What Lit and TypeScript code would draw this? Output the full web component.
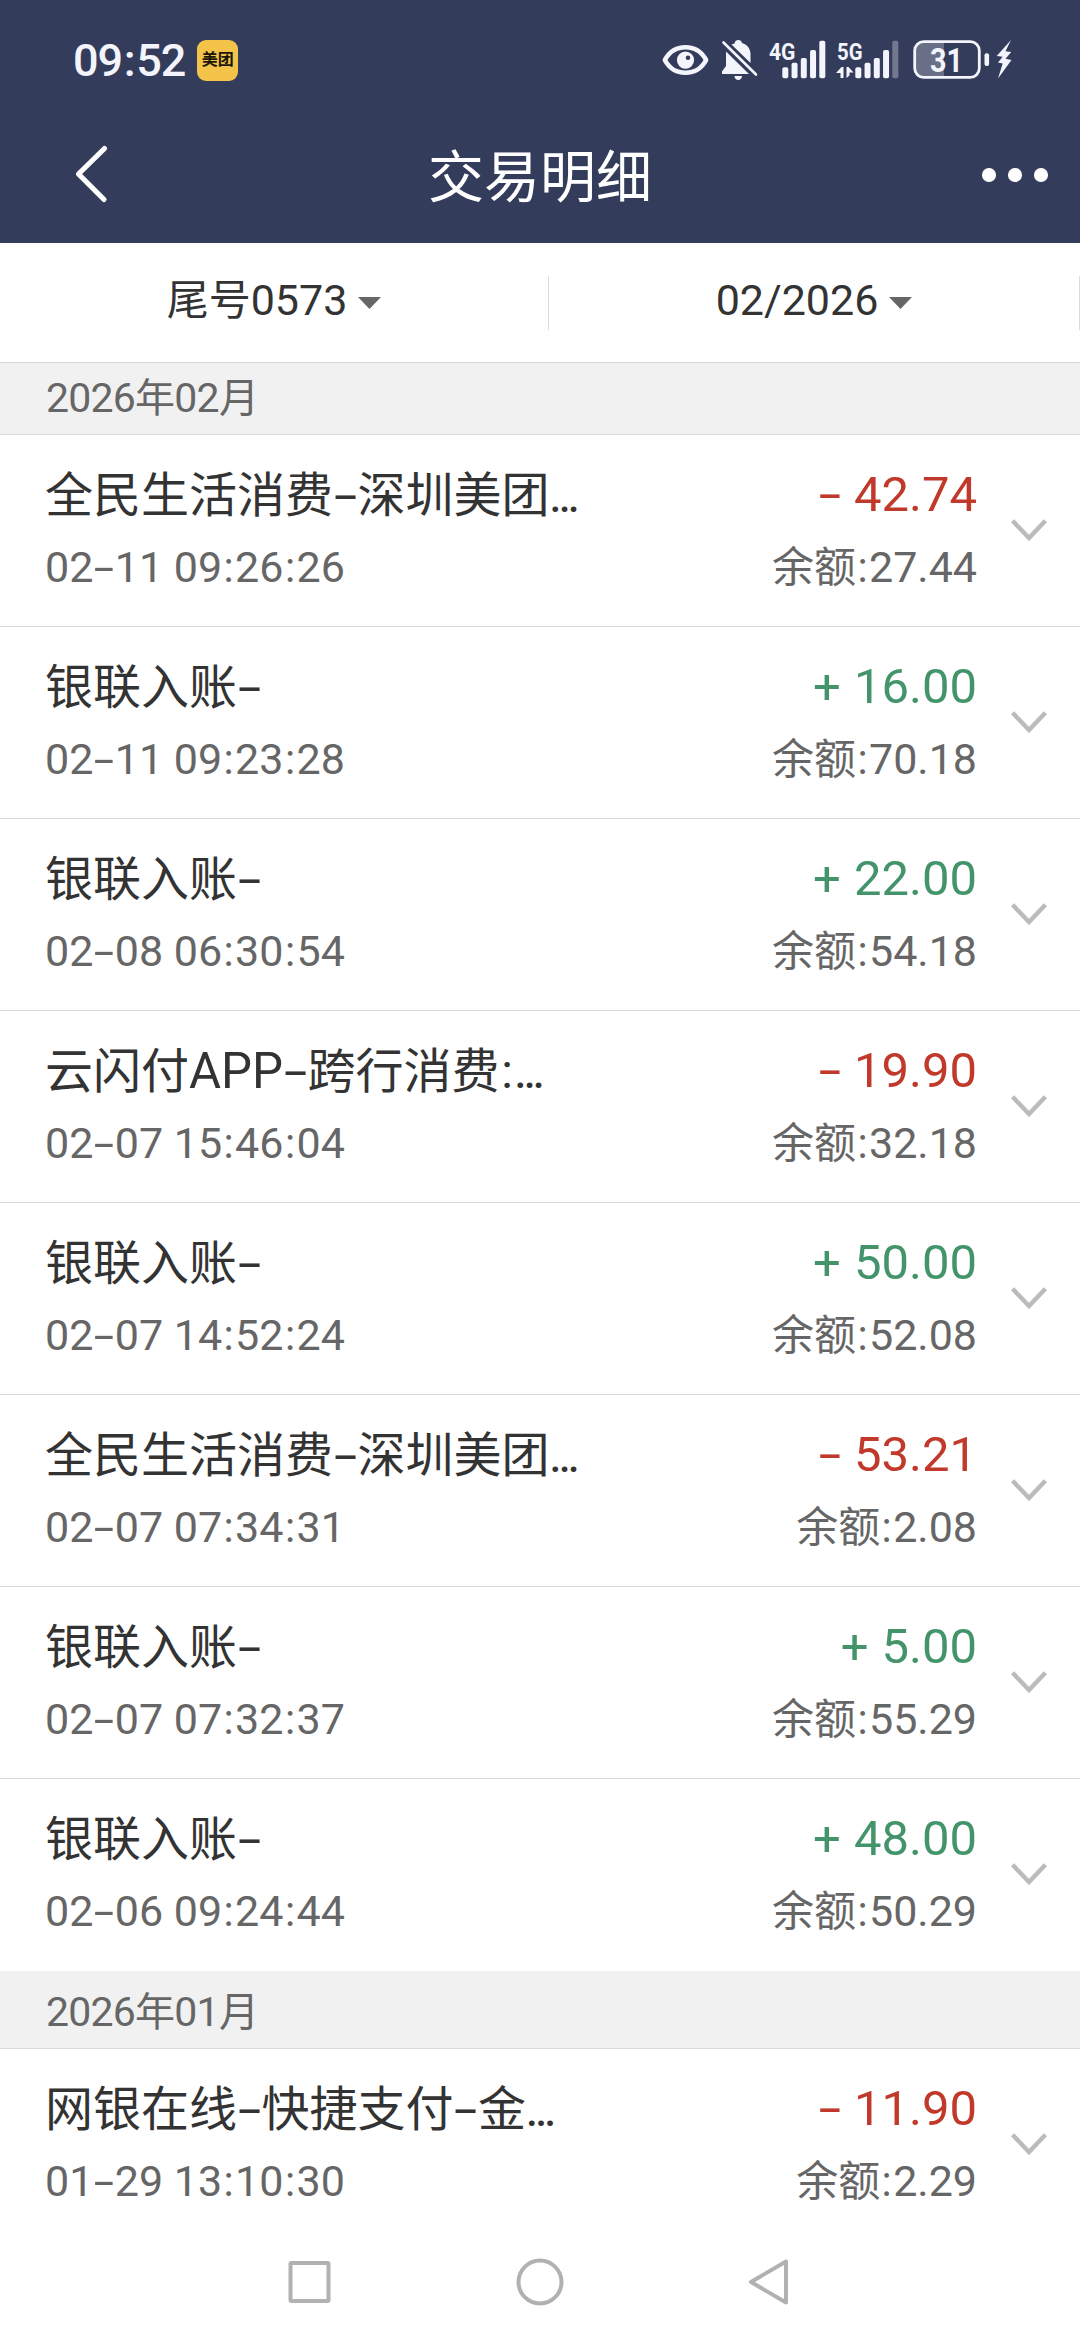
import { LitElement, html, css, svg } from "lit";
import { customElement, property } from "lit/decorators.js";

interface Entry {
  title: string;
  time: string;
  amount: string;
  balance: string;
}

interface Month {
  label: string;
  entries: Entry[];
}

const MONTHS: Month[] = [
  {
    label: "2026年02月",
    entries: [
      { title: "全民生活消费-深圳美团…", time: "02-11 09:26:26", amount: "- 42.74", balance: "27.44" },
      { title: "银联入账-", time: "02-11 09:23:28", amount: "+ 16.00", balance: "70.18" },
      { title: "银联入账-", time: "02-08 06:30:54", amount: "+ 22.00", balance: "54.18" },
      { title: "云闪付APP-跨行消费:…", time: "02-07 15:46:04", amount: "- 19.90", balance: "32.18" },
      { title: "银联入账-", time: "02-07 14:52:24", amount: "+ 50.00", balance: "52.08" },
      { title: "全民生活消费-深圳美团…", time: "02-07 07:34:31", amount: "- 53.21", balance: "2.08" },
      { title: "银联入账-", time: "02-07 07:32:37", amount: "+ 5.00", balance: "55.29" },
      { title: "银联入账-", time: "02-06 09:24:44", amount: "+ 48.00", balance: "50.29" },
    ],
  },
  {
    label: "2026年01月",
    entries: [
      { title: "网银在线-快捷支付-金…", time: "01-29 13:10:30", amount: "- 11.90", balance: "2.29" },
    ],
  },
];

/** Splits mixed text so that Latin runs, dashes, colons and ellipses get their own metrics. */
const mixed = (text: string) =>
  (text.match(/-|:|…|[\x20-\x2c\x2e-\x39\x3b-\x7e]+|[^\x00-\x7e…]+/g) ?? []).map((part) => {
    if (part === "-") return html`<span class="dash"><span class="stretch">-</span></span>`;
    if (part === ":") return html`<span class="colon">:</span>`;
    if (part === "…") return html`<span class="dots">…</span>`;
    if (part.charCodeAt(0) < 128) return html`<span class="latin">${part}</span>`;
    return part;
  });

const textStyles = css`
  .latin {
    font-size: 1.024em;
    line-height: 1;
    white-space: pre;
  }
  .dash {
    display: inline-block;
    width: 0.51em;
    line-height: 1;
    text-align: center;
  }
  .stretch {
    display: inline-block;
    transform: scaleX(1.75);
  }
  .colon {
    display: inline-block;
    width: 0.31em;
    line-height: 1;
    text-align: center;
  }
  .dots {
    font-size: 0.87em;
    font-weight: 500;
    line-height: 1;
  }
`;

@customElement("status-bar")
class StatusBar extends LitElement {
  static styles = css`
    :host {
      display: flex;
      align-items: center;
      height: 120px;
      padding: 0 68px 0 73px;
      color: #f3f4fc;
    }
    .clock {
      display: flex;
      font-size: 45px;
      font-weight: 500;
      line-height: 60px;
      letter-spacing: -1px;
      padding-top: 1px;
    }
    .sep {
      width: 14px;
      text-align: center;
    }
    .badge {
      display: flex;
      align-items: center;
      justify-content: center;
      width: 41px;
      height: 41px;
      margin-left: 12px;
      border-radius: 9px;
      background: #f4c44a;
      color: #1d1708;
      font-size: 16px;
      font-weight: 700;
      line-height: 16px;
    }
    .icons {
      margin-left: auto;
      display: block;
    }
    .net {
      font: 700 24px Roboto, sans-serif;
      fill: #f3f4fc;
    }
    .level {
      font: 700 34px Roboto, sans-serif;
      fill: #f3f4fc;
    }
  `;

  render() {
    const bars = (x: number, dim: boolean) =>
      [142, 128, 114, 90, 62].map(
        (top, i) => svg`<rect x=${x + i * 9.25} y=${top / 3} width="6" height=${(175 - top) / 3} rx="1.8"
          fill="#f3f4fc" opacity=${dim && i === 4 ? 0.33 : 1} />`
      );
    return html`
      <div class="clock"><span>09</span><span class="sep">:</span><span>52</span></div>
      <div class="badge">美团</div>
      <svg class="icons" width="352" height="80" viewBox="20 0 352 80">
        <g fill="#f3f4fc">
          <path fill-rule="evenodd" d="M45.5 25C56 25 63 30 68 38.5Q68.8 40 68 41.500C63 50 56 55 45.500 55S28 50 23 41.500Q22.200 40 23 38.500C28 30 35 25 45.500 25ZM45.500 29.500C37.500 29.500 31.500 33 27.500 40C31.500 47 37.500 50.500 45.500 50.500S59.500 47 63.500 40C59.500 33 53.500 29.500 45.500 29.500Z" />
          <path fill-rule="evenodd" d="M45.500 31.500A8.600 8.600 0 1 0 45.500 48.700A8.600 8.600 0 1 0 45.500 31.500ZM48 35.500A2.300 2.300 0 1 1 48 40.100A2.300 2.300 0 1 1 48 35.500Z" />
          <path d="M94.500 23.500C95 19 101.500 19 102 23C107.500 24.500 110.500 29 110.500 34V43L91.500 24.500Z" />
          <path d="M86 31.500L109 54H82V51.500L86 46Z" />
          <path d="M94.500 56H102C102 61.300 94.500 61.300 94.500 56Z" />
        </g>
        <path d="M83.500 22.500L116 54.500" stroke="#f3f4fc" stroke-width="2.600" stroke-linecap="round" />
        <text class="net" x="129" y="39.500" textLength="26.500" lengthAdjust="spacingAndGlyphs">4G</text>
        ${bars(142.3, false)}
        <text class="net" x="197" y="39.500" textLength="25.500" lengthAdjust="spacingAndGlyphs">5G</text>
        <path d="M203.500 47V58H200.500V53H196L201.500 47ZM206.500 47H208.500L213.500 52.500H209.500L209.500 55.500L206.500 58Z" fill="#f3f4fc" />
        ${bars(215.3, true)}
        <path d="M282 22H304V57H282Q275 57 275 50V29Q275 22 282 22Z" fill="#f3f4fc" opacity="0.28" />
        <rect x="274.700" y="21.700" width="64.600" height="35.600" rx="9" fill="none" stroke="#f3f4fc" stroke-width="2.800" />
        <text class="level" x="290" y="51.800" textLength="33" lengthAdjust="spacingAndGlyphs">31</text>
        <rect x="344.500" y="33.300" width="4.600" height="12.700" rx="2" fill="#f3f4fc" />
        <path d="M371 20L356.700 36L362.700 36.800L358 42.500L362.700 43.500L358 58.500L371.500 40L365.500 38.700L371.300 32L365.500 31.300Z" fill="#f3f4fc" />
      </svg>
    `;
  }
}

@customElement("title-bar")
class TitleBar extends LitElement {
  static styles = css`
    :host {
      display: grid;
      grid-template-columns: 1fr auto 1fr;
      align-items: center;
      height: 123px;
      padding: 0 32px 0 74px;
      box-sizing: border-box;
      color: #fff;
    }
    .heading {
      font-size: 56px;
      line-height: 70px;
      margin-left: -42px;
      padding-bottom: 7px;
    }
    .back {
      display: block;
      margin-bottom: 15px;
    }
    .more {
      justify-self: end;
      display: flex;
      gap: 12.400px;
      margin-bottom: 13px;
    }
    .dot {
      width: 13.700px;
      height: 13.700px;
      border-radius: 50%;
      background: #fff;
    }
  `;

  render() {
    return html`
      <svg class="back" width="36" height="60" viewBox="0 0 36 60">
        <path d="M30.500 4.500L4.500 30L30 55.500" fill="none" stroke="#fff" stroke-width="5.200" stroke-linecap="round" stroke-linejoin="round" />
      </svg>
      <div class="heading">交易明细</div>
      <div class="more"><span class="dot"></span><span class="dot"></span><span class="dot"></span></div>
    `;
  }
}

@customElement("filter-bar")
class FilterBar extends LitElement {
  static styles = [
    textStyles,
    css`
      :host {
        display: flex;
        height: 119px;
        box-sizing: border-box;
        padding-top: 33px;
        font-size: 42px;
        color: #333;
      }
      .item {
        display: flex;
        justify-content: center;
        width: 549px;
        height: 54px;
        box-sizing: border-box;
        border-right: 1px solid #dcdcdc;
        line-height: 50px;
      }
      .item.last {
        width: 531px;
      }
      .caret {
        display: block;
        margin: 21px 0 0 11px;
      }
    `,
  ];

  render() {
    const caret = html`<svg class="caret" width="23" height="12" viewBox="0 0 23 12"><path d="M0 0H23L11.500 12Z" fill="#666" /></svg>`;
    return html`
      <div class="item"><span>${mixed("尾号0573")}</span>${caret}</div>
      <div class="item last"><span>${mixed("02/2026")}</span>${caret}</div>
    `;
  }
}

@customElement("entry-row")
class EntryRow extends LitElement {
  @property({ attribute: false }) entry!: Entry;

  static styles = [
    textStyles,
    css`
      :host {
        display: grid;
        grid-template-columns: 1fr auto 36px;
        column-gap: 34px;
        height: 192px;
        box-sizing: border-box;
        padding: 28px 33px 0 45px;
        border-bottom: 1px solid #d9d9d9;
        background: #fff;
      }
      :host(.last) {
        border-bottom-color: transparent;
      }
      .col {
        display: flex;
        flex-direction: column;
        gap: 12px;
        padding-top: 1px;
        white-space: nowrap;
      }
      .col.right {
        align-items: flex-end;
        gap: 13px;
        padding-top: 0;
      }
      .title {
        font-size: 48px;
        line-height: 64px;
        color: #333;
      }
      .sub {
        font-size: 42px;
        line-height: 56px;
        color: #666;
      }
      .amount {
        display: flex;
        gap: 14px;
        font-size: 49px;
        line-height: 64px;
      }
      .amount.out {
        color: #c0392b;
      }
      .amount.in {
        color: #43946a;
      }
      .minus {
        display: inline-block;
        width: 20px;
        text-align: center;
        transform: scaleX(1.650);
      }
      .plus {
        margin-right: -1px;
      }
      .chevron {
        display: block;
        margin-top: 56px;
      }
    `,
  ];

  render() {
    const { title, time, amount, balance } = this.entry;
    const [sign, value] = amount.split(" ");
    return html`
      <div class="col">
        <div class="title">${mixed(title)}</div>
        <div class="sub">${mixed(time)}</div>
      </div>
      <div class="col right">
        <div class="amount ${sign === "-" ? "out" : "in"}">
          <span class=${sign === "-" ? "minus" : "plus"}>${sign}</span><span>${value}</span>
        </div>
        <div class="sub">${mixed("余额:" + balance)}</div>
      </div>
      <svg class="chevron" width="36" height="24" viewBox="0 0 36 24">
        <path d="M1.600 1.800L18 19L34.400 1.800" fill="none" stroke="#bbb" stroke-width="4.400" />
      </svg>
    `;
  }
}

@customElement("nav-bar")
class NavBar extends LitElement {
  static styles = css`
    :host {
      display: flex;
      justify-content: center;
      align-items: center;
      gap: 182px;
      height: 116px;
      background: #fff;
    }
    .key {
      display: block;
      fill: none;
      stroke: #b1b1b1;
      stroke-width: 4;
      stroke-linejoin: round;
    }
  `;

  render() {
    return html`
      <svg class="key" width="48" height="48" viewBox="0 0 48 48"><rect x="4.500" y="5" width="38" height="38" rx="1" /></svg>
      <svg class="key" width="48" height="48" viewBox="0 0 48 48"><circle cx="24" cy="24" r="21.500" /></svg>
      <svg class="key" width="48" height="48" viewBox="0 0 48 48"><path d="M40 3.500V44.500L5 24Z" /></svg>
    `;
  }
}

@customElement("app-root")
class AppRoot extends LitElement {
  static styles = [
    textStyles,
    css`
      :host {
        display: flex;
        flex-direction: column;
        width: 1080px;
        height: 2340px;
        overflow: hidden;
        background: #fff;
        font-family: Roboto, "Noto Sans CJK SC", sans-serif;
      }
      .top {
        flex: none;
        background: #343c5b;
      }
      .list {
        flex: 1;
        min-height: 0;
        overflow: hidden;
      }
      .month {
        height: 73px;
        box-sizing: border-box;
        padding: 11px 0 0 46px;
        border-top: 1px solid #d9d9d9;
        border-bottom: 1px solid #d9d9d9;
        background: #f1f1f1;
        color: #666;
        font-size: 40px;
        line-height: 50px;
        letter-spacing: -0.750px;
      }
      .month.later {
        height: 78px;
        padding-top: 16px;
        border-top-color: #f1f1f1;
      }
    `,
  ];

  render() {
    return html`
      <header class="top"><status-bar></status-bar><title-bar></title-bar></header>
      <filter-bar></filter-bar>
      <main class="list">
        ${MONTHS.map(
          (month, m) => html`
            <div class="month ${m ? "later" : ""}">${mixed(month.label)}</div>
            ${month.entries.map(
              (entry, i) => html`<entry-row
                class=${i === month.entries.length - 1 ? "last" : ""}
                .entry=${entry}
              ></entry-row>`
            )}
          `
        )}
      </main>
      <nav-bar></nav-bar>
    `;
  }
}
